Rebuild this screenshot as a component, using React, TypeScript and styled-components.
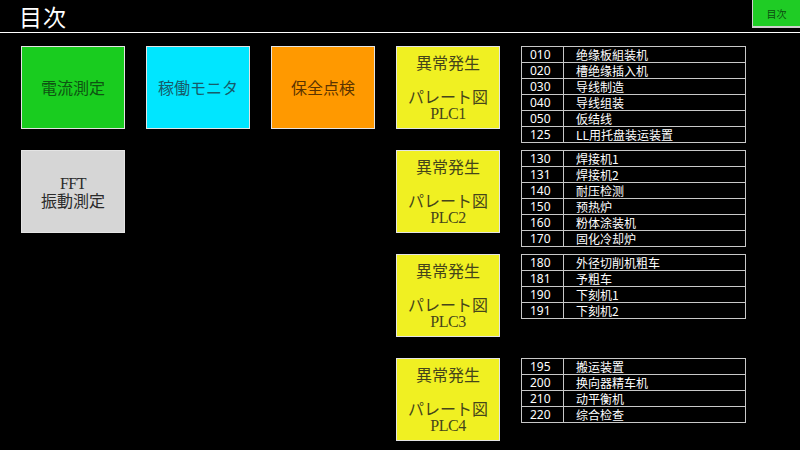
import React from "react";
import styled, { createGlobalStyle } from "styled-components";

const GlobalStyle = createGlobalStyle`
  html, body {
    margin: 0;
    padding: 0;
    background: #000000;
  }
  body {
    font-family: "Noto Sans CJK JP", "Noto Sans", sans-serif;
    color: #ffffff;
  }
`;

const Page = styled.div`
  width: 800px;
  height: 450px;
  background: #000000;
  overflow: hidden;
`;

const Header = styled.div`
  height: 32px;
  display: flex;
  justify-content: space-between;
  align-items: flex-start;
  border-bottom: 1px solid #ffffff;
  padding-left: 19px;
`;

const Title = styled.h1`
  margin: 0;
  font-size: 23px;
  font-weight: 400;
  line-height: 32px;
  color: #ffffff;
  letter-spacing: 1px;
`;

const IndexButton = styled.div`
  width: 48px;
  height: 28px;
  box-sizing: border-box;
  background: #1fcc25;
  border-left: 1px solid #cfcfcf;
  border-bottom: 2px solid #cfcfcf;
  display: flex;
  align-items: center;
  justify-content: center;
  font-size: 10px;
  color: #0d4d10;
`;

const Grid = styled.div`
  display: grid;
  grid-template-columns: repeat(4, 104px) 225px;
  grid-auto-rows: 83px;
  gap: 21px;
  padding: 13px 0 0 21px;
`;

const Tile = styled.div<{ $bg: string; $fg: string; $col: number; $serif?: boolean }>`
  grid-column: ${(p) => p.$col};
  box-sizing: border-box;
  background: ${(p) => p.$bg};
  color: ${(p) => p.$fg};
  border: 1px solid #e4e4e4;
  display: flex;
  flex-direction: column;
  align-items: center;
  justify-content: center;
  text-align: center;
  font-size: 16px;
  line-height: 17px;
  white-space: pre-line;
`;

const SerifLine = styled.span`
  font-family: "Liberation Serif", "Noto Sans CJK JP", serif;
  font-size: 16px;
  letter-spacing: -0.5px;
`;

const Table = styled.div`
  grid-column: 5;
  align-self: start;
  border: 1px solid #c8c8c8;
  width: 225px;
  box-sizing: border-box;
`;

const Row = styled.div`
  display: grid;
  grid-template-columns: 42px 1fr;
  height: 16px;
  box-sizing: border-box;
  border-top: 1px solid #c8c8c8;
  &:first-child {
    border-top: none;
    height: 15px;
  }
`;

const Code = styled.div`
  box-sizing: border-box;
  border-right: 1px solid #c8c8c8;
  padding-left: 8px;
  font-family: "Noto Sans", "Noto Sans CJK SC", sans-serif;
  font-size: 12px;
  line-height: 15px;
`;

const Name = styled.div`
  padding-left: 12px;
  font-family: "Noto Sans CJK SC", "Noto Sans", sans-serif;
  font-size: 12px;
  line-height: 15px;
  white-space: nowrap;
`;

const plcs = [
  {
    name: "PLC1",
    rows: [
      ["010", "绝缘板組装机"],
      ["020", "槽绝缘插入机"],
      ["030", "导线制造"],
      ["040", "导线组装"],
      ["050", "仮结线"],
      ["125", "LL用托盘装运装置"],
    ],
  },
  {
    name: "PLC2",
    rows: [
      ["130", "焊接机1"],
      ["131", "焊接机2"],
      ["140", "耐压检测"],
      ["150", "预热炉"],
      ["160", "粉体涂装机"],
      ["170", "固化冷却炉"],
    ],
  },
  {
    name: "PLC3",
    rows: [
      ["180", "外径切削机粗车"],
      ["181", "予粗车"],
      ["190", "下刻机1"],
      ["191", "下刻机2"],
    ],
  },
  {
    name: "PLC4",
    rows: [
      ["195", "搬运装置"],
      ["200", "换向器精车机"],
      ["210", "动平衡机"],
      ["220", "综合检查"],
    ],
  },
];

const App: React.FC = () => {
  return (
    <Page>
      <GlobalStyle />
      <Header>
        <Title>目次</Title>
        <IndexButton>目次</IndexButton>
      </Header>
      <Grid>
        <Tile $bg="#19cc1f" $fg="#0e5412" $col={1}>電流測定</Tile>
        <Tile $bg="#00e6ff" $fg="#175c6a" $col={2}>稼働モニタ</Tile>
        <Tile $bg="#ff9900" $fg="#5a3300" $col={3}>保全点検</Tile>
        {plcs.map((plc, i) => (
          <React.Fragment key={plc.name}>
            {i === 1 && (
              <Tile $bg="#d6d6d6" $fg="#2a2a2a" $col={1}>
                <SerifLine>FFT</SerifLine>
                <span>振動測定</span>
              </Tile>
            )}
            <Tile $bg="#f0f022" $fg="#45451a" $col={4}>
              <span>異常発生</span>
              <span>&nbsp;</span>
              <span>パレート図</span>
              <SerifLine>{plc.name}</SerifLine>
            </Tile>
            <Table>
              {plc.rows.map(([code, name]) => (
                <Row key={code}>
                  <Code>{code}</Code>
                  <Name>{name}</Name>
                </Row>
              ))}
            </Table>
          </React.Fragment>
        ))}
      </Grid>
    </Page>
  );
};

export default App;
